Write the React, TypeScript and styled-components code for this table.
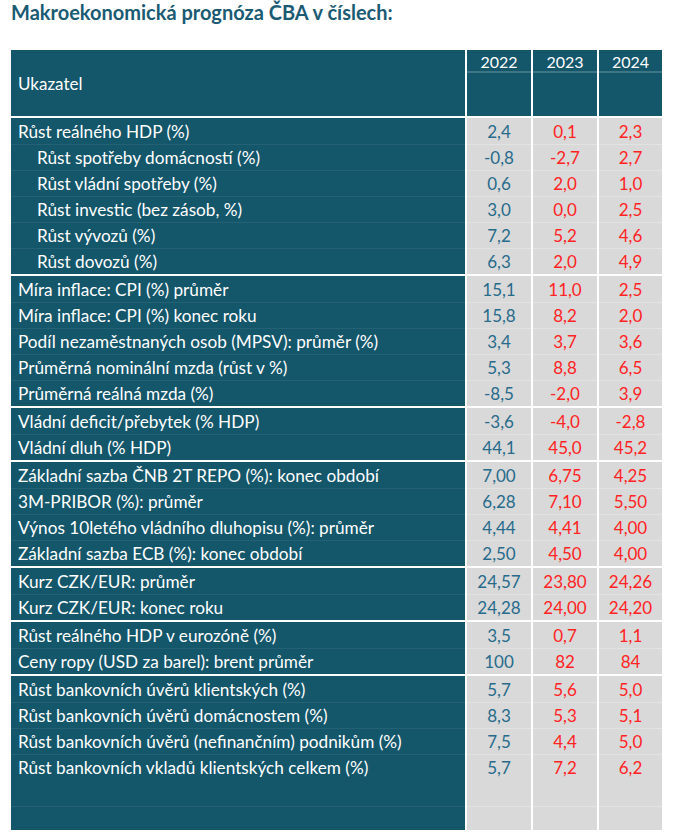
import React from "react";
import styled, { createGlobalStyle } from "styled-components";

const Global = createGlobalStyle`
  html, body { margin: 0; padding: 0; background: #ffffff; }
  body { font-family: Lato, "Open Sans", sans-serif; }
`;

const Page = styled.div`
  width: 674px;
  height: 833px;
  overflow: hidden;
  background: #fff;
`;

const Title = styled.h1`
  margin: 0;
  padding: 0 0 0 11px;
  height: 48px;
  box-sizing: border-box;
  font-family: Lato, "Open Sans", sans-serif;
  font-weight: 700;
  font-size: 20px;
  line-height: 24px;
  color: #1b5a73;
`;

const Table = styled.div`
  margin-left: 11px;
  width: 651px;
  display: flex;
  flex-direction: column;
  gap: 2px;
`;

const COLS = "454px 64px 64px 63px";

const Header = styled.div`
  display: grid;
  grid-template-columns: ${COLS};
  column-gap: 2px;
  height: 66px;
  margin-top: 2px;
`;

const HeadLabel = styled.div`
  background: #14566a;
  color: #fff;
  font-size: 17px;
  display: flex;
  align-items: center;
  padding-left: 7px;
`;

const HeadYear = styled.div`
  background: #14566a;
  color: #fff;
  font-size: 16px;
  display: flex;
  flex-direction: column;
`;

const YearText = styled.div`
  height: 21px;
  line-height: 23px;
  text-align: center;
  border-bottom: 2px solid rgba(255, 255, 255, 0.18);
`;

const Group = styled.div`
  display: grid;
  grid-template-columns: ${COLS};
  column-gap: 2px;
`;

const Label = styled.div<{ $indent?: boolean; $h?: number; $first?: boolean }>`
  background: #14566a;
  color: #fff;
  font-size: 17.2px;
  height: ${(p) => p.$h ?? 26}px;
  line-height: 26px;
  padding-left: ${(p) => (p.$indent ? 26 : 7)}px;
  box-sizing: border-box;
  white-space: nowrap;
  border-top: 1px solid ${(p) => (p.$first ? "transparent" : "rgba(255,255,255,0.07)")};
`;

const Value = styled.div<{ $red?: boolean; $h?: number; $first?: boolean }>`
  background: #d9d9d9;
  color: ${(p) => (p.$red ? "#ff2323" : "#276b8b")};
  font-size: 17px;
  height: ${(p) => p.$h ?? 26}px;
  line-height: 26px;
  text-align: center;
  box-sizing: border-box;
  border-top: 1px solid ${(p) => (p.$first ? "transparent" : "rgba(255,255,255,0.25)")};
`;

type Row = { label: string; v: [string, string, string]; indent?: boolean; h?: number };

const groups: Row[][] = [
  [
    { label: "Růst reálného HDP (%)", v: ["2,4", "0,1", "2,3"] },
    { label: "Růst spotřeby domácností (%)", v: ["-0,8", "-2,7", "2,7"], indent: true },
    { label: "Růst vládní spotřeby (%)", v: ["0,6", "2,0", "1,0"], indent: true },
    { label: "Růst investic (bez zásob, %)", v: ["3,0", "0,0", "2,5"], indent: true },
    { label: "Růst vývozů (%)", v: ["7,2", "5,2", "4,6"], indent: true },
    { label: "Růst dovozů (%)", v: ["6,3", "2,0", "4,9"], indent: true },
  ],
  [
    { label: "Míra inflace: CPI (%) průměr", v: ["15,1", "11,0", "2,5"] },
    { label: "Míra inflace: CPI (%) konec roku", v: ["15,8", "8,2", "2,0"] },
    { label: "Podíl nezaměstnaných osob (MPSV): průměr (%)", v: ["3,4", "3,7", "3,6"] },
    { label: "Průměrná nominální mzda (růst v %)", v: ["5,3", "8,8", "6,5"] },
    { label: "Průměrná reálná mzda (%)", v: ["-8,5", "-2,0", "3,9"] },
  ],
  [
    { label: "Vládní deficit/přebytek (% HDP)", v: ["-3,6", "-4,0", "-2,8"] },
    { label: "Vládní dluh (% HDP)", v: ["44,1", "45,0", "45,2"] },
  ],
  [
    { label: "Základní sazba ČNB 2T REPO (%): konec období", v: ["7,00", "6,75", "4,25"] },
    { label: "3M-PRIBOR (%): průměr", v: ["6,28", "7,10", "5,50"] },
    { label: "Výnos 10letého vládního dluhopisu (%): průměr", v: ["4,44", "4,41", "4,00"] },
    { label: "Základní sazba ECB (%): konec období", v: ["2,50", "4,50", "4,00"] },
  ],
  [
    { label: "Kurz CZK/EUR: průměr", v: ["24,57", "23,80", "24,26"] },
    { label: "Kurz CZK/EUR: konec roku", v: ["24,28", "24,00", "24,20"] },
  ],
  [
    { label: "Růst reálného HDP v eurozóně (%)", v: ["3,5", "0,7", "1,1"] },
    { label: "Ceny ropy (USD za barel): brent průměr", v: ["100", "82", "84"] },
  ],
  [
    { label: "Růst bankovních úvěrů klientských (%)", v: ["5,7", "5,6", "5,0"] },
    { label: "Růst bankovních úvěrů domácnostem (%)", v: ["8,3", "5,3", "5,1"] },
    { label: "Růst bankovních úvěrů (nefinančním) podnikům (%)", v: ["7,5", "4,4", "5,0"] },
    { label: "Růst bankovních vkladů klientských celkem (%)", v: ["5,7", "7,2", "6,2"], h: 52 },
    { label: "", v: ["", "", ""], h: 24 },
  ],
];

export default function App() {
  return (
    <Page>
      <Global />
      <Title>Makroekonomická prognóza ČBA v číslech:</Title>
      <Table>
        <Header>
          <HeadLabel>Ukazatel</HeadLabel>
          {["2022", "2023", "2024"].map((y) => (
            <HeadYear key={y}>
              <YearText>{y}</YearText>
            </HeadYear>
          ))}
        </Header>
        {groups.map((g, gi) => (
          <Group key={gi}>
            {g.map((r, ri) => (
              <React.Fragment key={ri}>
                <Label $indent={r.indent} $h={r.h} $first={ri === 0}>
                  {r.label}
                </Label>
                {r.v.map((val, vi) => (
                  <Value key={vi} $red={vi > 0} $h={r.h} $first={ri === 0}>
                    {val}
                  </Value>
                ))}
              </React.Fragment>
            ))}
          </Group>
        ))}
      </Table>
    </Page>
  );
}
